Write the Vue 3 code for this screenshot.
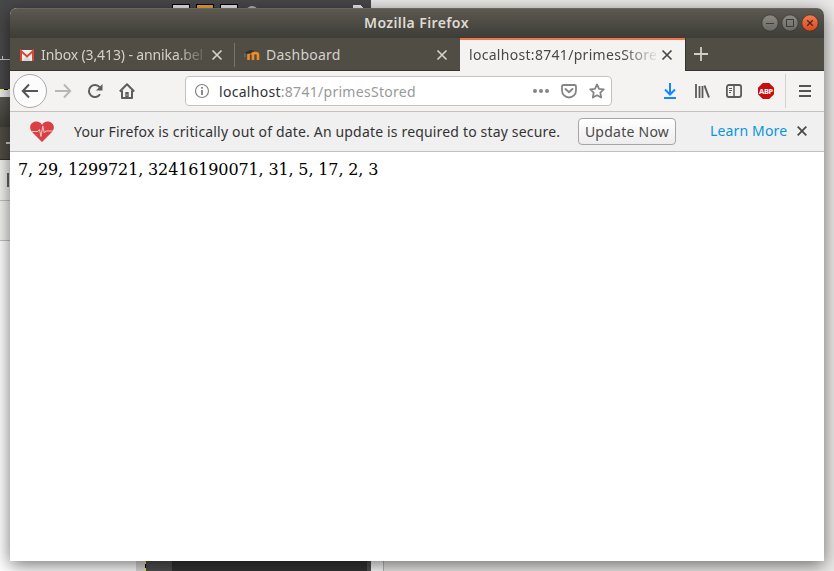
<script setup>
const tabs = [
  { icon: 'mail', title: 'Inbox (3,413) - annika.bel', kind: 'inbox' },
  { icon: 'moodle', title: 'Dashboard', kind: 'dash' },
  { icon: '', title: 'localhost:8741/primesStored', kind: 'active' },
]
</script>

<template>
  <div class="desktop">
    <svg class="backdrop" width="834" height="571" shape-rendering="crispEdges">
      <defs>
        <linearGradient id="bar" x2="0" y2="1"><stop stop-color="#5b5950" /><stop offset="1" stop-color="#403f3a" /></linearGradient>
      </defs>
      <rect width="834" height="571" fill="#ebeae8" />
      <rect width="371" height="97" fill="#48484a" />
      <g stroke="#000" fill="#e8e6ea">
        <rect x="172.500" y="4.500" width="17" height="10" />
        <rect x="196.500" y="4.500" width="17" height="10" fill="#ec9f3a" />
        <rect x="220.500" y="4.500" width="17" height="10" />
      </g>
      <circle cx="252" cy="12" r="6" fill="#bbb" shape-rendering="auto" />
      <path d="M353 5h8l3 4h-11z" fill="#eee" />
      <path d="M0 59.500h10M2.500 56v3" stroke="#ccc" />
      <path d="M0 89.500h10" stroke="#f6f13a" />
      <path d="M4 89.500h4" stroke="#000" />
      <rect y="90" width="10" height="7" fill="#eee" />
      <rect y="97" width="10" height="30" fill="url(#bar)" />
      <rect y="127" width="10" height="33" fill="#504d45" />
      <rect y="159" width="10" height="1" fill="#302e2a" />
      <path d="M6 143h4" stroke="#d0cec8" stroke-width="2" />
      <rect y="160" width="136" height="81" fill="#f4f3f2" />
      <rect y="241" width="136" height="330" fill="#fff" />
      <path d="M0 200.500h10M0 240.500h10" stroke="#c3c2c1" />
      <rect x="7" y="173" width="2" height="14" fill="#666" />
      <rect x="136" y="550" width="10" height="21" fill="#dddbd9" />
      <rect x="146" y="550" width="225" height="21" fill="#505050" />
      <rect x="172" y="550" width="195" height="21" fill="#333" />
      <path d="M145.500 560v11" stroke="#f1f22c" />
      <path d="M145.500 564v4" stroke="#000" />
      <rect x="371" y="550" width="12" height="21" fill="#fff" />
      <path d="M383.500 550v21" stroke="#bbb" />
    </svg>

    <main class="window">
      <header class="titlebar">
        <span class="wintitle">Mozilla Firefox</span>
        <div class="controls">
          <svg v-for="c in ['min', 'max', 'close']" :key="c" width="18" height="18" viewBox="0 0 18 18">
            <defs>
              <linearGradient id="grey" x2="0" y2="1"><stop stop-color="#8c8a83" /><stop offset="1" stop-color="#6b6963" /></linearGradient>
              <linearGradient id="orange" x2="0" y2="1"><stop stop-color="#f47c54" /><stop offset="1" stop-color="#dc4718" /></linearGradient>
            </defs>
            <circle cx="9" cy="9" r="8.200" :fill="c === 'close' ? 'url(#orange)' : 'url(#grey)'" stroke="#33322d" stroke-width=".7" />
            <path v-if="c === 'min'" d="M5 9.500h8" stroke="#3c3b37" />
            <path v-else-if="c === 'max'" d="M5.500 5.500h7v7h-7z" fill="none" stroke="#3c3b37" />
            <path v-else d="M6.200 6.200l5.600 5.600m0-5.600l-5.600 5.600" stroke="#3c2b25" stroke-width="1.300" />
          </svg>
        </div>
      </header>

      <nav class="tabs">
        <div v-for="t in tabs" :key="t.kind" class="tab" :class="t.kind">
          <svg v-if="t.icon === 'mail'" class="fav" width="16" height="16" viewBox="0 0 16 16">
            <path d="M1 3h14v11H1z" fill="#f1efec" /><path d="M3 14l5-5 5 5z" fill="#d9d7d4" />
            <path d="M2 14V4l6 5.500L14 4v10" fill="none" stroke="#d94637" stroke-width="2" />
          </svg>
          <svg v-else-if="t.icon === 'moodle'" class="fav" width="16" height="16" viewBox="0 0 16 16">
            <path d="M4.500 13V8q0-2 2-2 2.500 0 2.500 2v5m0-5q0-2 2.500-2T14 8v5" fill="none" stroke="#f28b25" stroke-width="2.600" />
            <path d="M0 6l6-3 4 .5-3 3-5 .5z" fill="#33312e" /><path d="M1 6v4" stroke="#777" />
          </svg>
          <span class="label">{{ t.title }}</span>
          <svg class="x" width="12" height="12" viewBox="0 0 12 12"><path d="M1.500 1.500l9 9m0-9l-9 9" fill="none" stroke="currentColor" stroke-width="1.700" /></svg>
        </div>
        <svg class="plus" width="14" height="14"><path d="M7 0v14M0 7h14" stroke="#d0cec8" stroke-width="1.800" /></svg>
      </nav>

      <section class="toolbar">
        <div class="back"><svg width="18" height="16" viewBox="0 0 18 16"><path d="M17 8H2M8 1.500L1.800 8 8 14.500" fill="none" stroke="#555452" stroke-width="2" /></svg></div>
        <svg class="fwd" width="18" height="16" viewBox="0 0 18 16"><path d="M1 8h14M10 1.500L16.200 8 10 14.500" fill="none" stroke="#b8b7b5" stroke-width="2" /></svg>
        <svg class="reload" width="16" height="16" viewBox="0 0 16 16"><path d="M13 11.200A6 6 0 1 1 12.600 4.200" fill="none" stroke="#5e5d5b" stroke-width="2" /><path d="M15.500 1v6.500H9z" fill="#5e5d5b" /></svg>
        <svg class="home" width="16" height="16" viewBox="0 0 16 16"><path d="M.8 8.500L8 1.300l7.200 7.200M3 7.500V15h10V7.500" fill="none" stroke="#5e5d5b" stroke-width="2" stroke-linejoin="round" /><path d="M6.300 15V9h3.400v6" fill="#5e5d5b" /><path d="M8 11v2" stroke="#aaa" /></svg>
        <div class="urlbar">
          <svg class="info" width="16" height="16" viewBox="0 0 16 16"><circle cx="8" cy="8" r="6.500" fill="none" stroke="#858585" stroke-width="1.200" /><path d="M8 7v5M8 4v1.700" stroke="#777" stroke-width="1.700" /></svg>
          <span class="url"><b>localhost</b>:8741/primesStored</span>
          <svg class="dots" width="16" height="6"><circle cx="2" cy="3" r="2" /><circle cx="8" cy="3" r="2" /><circle cx="14" cy="3" r="2" /></svg>
          <svg class="pocket" width="16" height="16" viewBox="0 0 16 16"><path d="M2.500 2h11q1.500 0 1.500 1.500V7.500a7 7 0 0 1-14 0V3.500Q1 2 2.500 2z" fill="none" stroke="#858585" stroke-width="1.800" /><path d="M4.500 6L8 9.300 11.500 6" fill="none" stroke="#858585" stroke-width="1.900" stroke-linecap="round" /></svg>
          <svg class="star" width="16" height="16" viewBox="0 0 16 16"><path d="M8 1.500l2 4.300 4.800.5-3.500 3.300.9 4.900L8 12.200l-4.200 2.300.9-4.900L1.200 6.300 6 5.800z" fill="none" stroke="#858585" stroke-width="1.800" stroke-linejoin="round" /></svg>
        </div>
        <div class="tools">
          <svg width="16" height="16" viewBox="0 0 16 16"><path d="M8 0v11M3 6.500l5 5 5-5M2 15h12" fill="none" stroke="#1687fb" stroke-width="2" /></svg>
          <svg width="16" height="16" viewBox="0 0 16 16"><path d="M2 1v14M5.500 3v12M8.500 3v12" stroke="#5c5b59" stroke-width="1.800" /><path d="M10.500 2.500L15 14.500" stroke="#5c5b59" stroke-width="2" /></svg>
          <svg width="16" height="16" viewBox="0 0 16 16"><rect x=".9" y="2" width="14.200" height="12" rx="2" fill="none" stroke="#5c5b59" stroke-width="1.800" /><path d="M8 2v12" stroke="#5c5b59" stroke-width="1.500" /><path d="M3 5.500h3M3 7.500h3M3 9.500h2" stroke="#5c5b59" /></svg>
          <div class="abp">ABP</div>
        </div>
        <i class="rule"></i>
        <svg class="menu" width="12" height="14"><path d="M0 2h12M0 7h12M0 12h12" stroke="#555452" stroke-width="2" /></svg>
      </section>

      <section class="notice">
        <svg class="heart" width="24" height="22" viewBox="0 0 24 22"><path d="M12 21L2 11C-2 6 1 .5 6.500.5 9 .5 11 2 12 4 13 2 15 .5 17.500.5 23 .5 26 6 22 11z" fill="#d94045" /><path d="M1 10.500h7l1.500-2 1.500 7L12.800 5l1.500 7 1.500-2H23" fill="none" stroke="#f3c4c1" stroke-width="1" /></svg>
        <span class="message">Your Firefox is critically out of date. An update is required to stay secure.</span>
        <button>Update Now</button>
        <a>Learn More</a>
        <svg class="dismiss" width="10" height="10"><path d="M.7.7l8.600 8.600m0-8.600L.7 9.300" stroke="#4a4947" stroke-width="1.800" /></svg>
      </section>
      <article>7, 29, 1299721, 32416190071, 31, 5, 17, 2, 3</article>
    </main>
  </div>
</template>

<style>
body { overflow: hidden; }
</style>
<style scoped>
* { box-sizing: border-box; }
.desktop { position: relative; width: 834px; height: 571px; padding: 8px 10px 10px; overflow: hidden; font: 14px/20px "Noto Sans", sans-serif; }
.backdrop { position: absolute; left: 0; top: 0; }
svg { display: block; flex: none; }
span { white-space: nowrap; }
.window { position: relative; width: 814px; height: 553px; border-radius: 7px 7px 0 0; overflow: hidden; background: #fff; box-shadow: 0 4px 18px rgba(0, 0, 0, .55); }
.titlebar { height: 30px; display: flex; align-items: center; justify-content: flex-end; padding: 0 5px 1px; background: linear-gradient(#5b5950, #3d3c37); border-top: 1px solid #69675d; }
.wintitle { width: 105px; margin-right: 292px; color: #dfdbd2; font-weight: 600; letter-spacing: .4px; }
.controls { display: flex; gap: 2px; }
.tabs { height: 33px; background: #504d45; display: flex; }
.tab { width: 225px; height: 33px; display: flex; align-items: center; padding: 2px 12px 0 9px; color: #d5d1c9; border-bottom: 1px solid #36342f; }
.fav { margin-right: 6px; }
.label { flex: 1; overflow: hidden; min-width: 0; margin-right: 5px; }
.inbox .label { letter-spacing: -.12px; }
.inbox .label, .active .label { mask-image: linear-gradient(90deg, #000 82%, transparent 102%); }
.dash { position: relative; letter-spacing: .25px; }
.dash::before { content: ""; position: absolute; left: -1px; top: 5px; width: 1px; height: 24px; background: #77746b; }
.active { background: #f4f3f2; color: #4a4844; border-top: 2px solid #f0764b; border-bottom: 0; padding-top: 0; padding-bottom: 1px; letter-spacing: .3px; }
.plus { margin: 9px 0 0 9px; }
.tabs::after { content: ""; flex: 1; align-self: stretch; margin-left: -23px; border-left: 1px solid #36342f; border-bottom: 1px solid #36342f; }
.toolbar { height: 41px; background: #f4f3f2; border-bottom: 1px solid #c3c2c1; display: flex; align-items: center; padding-left: 3px; }
.back { width: 34px; height: 34px; border: 1px solid #aaa9a7; border-radius: 50%; background: #fcfcfc; display: grid; place-items: center; }
.fwd { margin-left: 7px; }
.reload { margin-left: 15px; }
.home { margin-left: 16px; }
.urlbar { width: 427px; height: 30px; margin-left: 50px; border: 1px solid #c5c2be; border-radius: 4px; background: #fff; display: flex; align-items: center; padding: 0 6px 0 8px; }
.url { flex: 1; margin-left: 9px; color: #999; letter-spacing: .29px; padding-top: 1px; }
.url b { font-weight: 400; color: #333; }
.dots, .pocket { fill: #858585; margin-right: 12px; }
.tools { display: flex; gap: 16px; margin-left: 50px; }
.abp { width: 16px; height: 16px; background: #c70d0d; clip-path: polygon(30% 0, 70% 0, 100% 30%, 100% 70%, 70% 100%, 30% 100%, 0 70%, 0 30%); color: #fff; font: bold 7.5px/16px "Noto Sans", sans-serif; text-align: center; letter-spacing: -.3px; }
.rule { width: 1px; height: 34px; background: #d3d2d1; margin-left: 11px; }
.menu { margin-left: 13px; }
.notice { height: 40px; background: #f0f0f0; border-bottom: 1px solid #c1c0c0; display: flex; align-items: center; padding-left: 20px; color: #333; }
.message { width: 486px; margin-left: 20px; letter-spacing: .17px; }
button { width: 98px; height: 27px; padding: 0; margin-left: 18px; border: 1px solid #a6a5a3; border-radius: 4px; background: linear-gradient(#fff, #ededed); color: #4a4947; font: 14px "Noto Sans", sans-serif; letter-spacing: .25px; white-space: nowrap; }
a { width: 78px; color: #0996dc; margin-left: 34px; letter-spacing: .15px; white-space: nowrap; margin-top: -1px; }
.dismiss { margin: -1px 0 0 9px; }
article { padding: 8px; color: #000; font: 16px/19px "DejaVu Serif", serif; letter-spacing: -.14px; white-space: nowrap; }
</style>
